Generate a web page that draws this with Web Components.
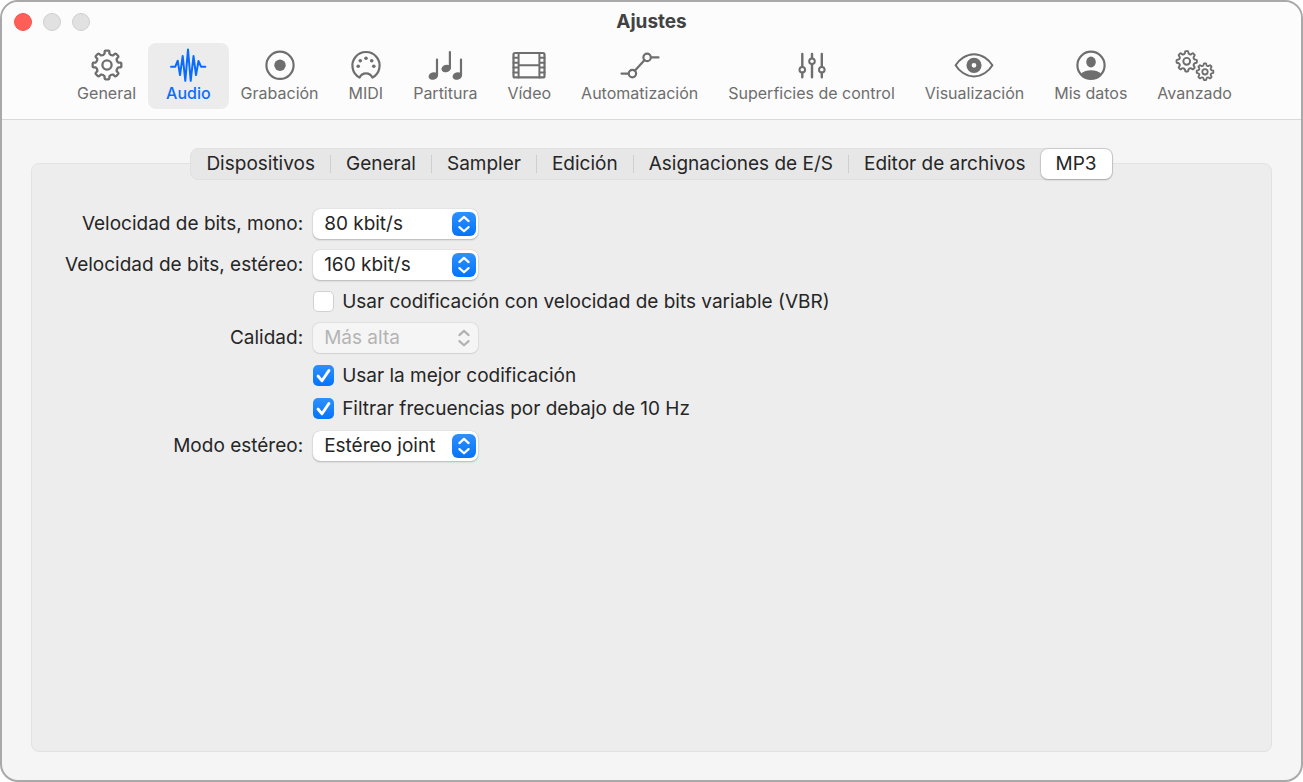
<!DOCTYPE html>
<html lang="es">
<head>
<meta charset="utf-8">
<title>Ajustes</title>
<style>
html, body { height: 100%; }
body { margin: 0; background: #fff; font-family: Inter, "Liberation Sans", sans-serif; color: #262626; }
</style>
</head>
<body>
<settings-window heading="Ajustes">
  <tool-item slot="tools" icon="gear">General</tool-item>
  <tool-item slot="tools" icon="audio" selected>Audio</tool-item>
  <tool-item slot="tools" icon="record">Grabación</tool-item>
  <tool-item slot="tools" icon="midi">MIDI</tool-item>
  <tool-item slot="tools" icon="notes">Partitura</tool-item>
  <tool-item slot="tools" icon="film">Vídeo</tool-item>
  <tool-item slot="tools" icon="automation">Automatización</tool-item>
  <tool-item slot="tools" icon="faders">Superficies de control</tool-item>
  <tool-item slot="tools" icon="eye">Visualización</tool-item>
  <tool-item slot="tools" icon="user">Mis datos</tool-item>
  <tool-item slot="tools" icon="gears">Avanzado</tool-item>
  <settings-panel>
    <tab-bar slot="tabs">
      <tab-item>Dispositivos</tab-item>
      <tab-item>General</tab-item>
      <tab-item>Sampler</tab-item>
      <tab-item>Edición</tab-item>
      <tab-item>Asignaciones de E/S</tab-item>
      <tab-item>Editor de archivos</tab-item>
      <tab-item selected>MP3</tab-item>
    </tab-bar>
    <popup-field label="Velocidad de bits, mono:" value="80 kbit/s"></popup-field>
    <popup-field label="Velocidad de bits, estéreo:" value="160 kbit/s"></popup-field>
    <check-field>Usar codificación con velocidad de bits variable (VBR)</check-field>
    <popup-field label="Calidad:" value="Más alta" disabled></popup-field>
    <check-group>
      <check-field checked>Usar la mejor codificación</check-field>
      <check-field checked>Filtrar frecuencias por debajo de 10 Hz</check-field>
    </check-group>
    <popup-field label="Modo estéreo:" value="Estéreo joint"></popup-field>
  </settings-panel>
</settings-window>

<script>
// Outline of a cog with eight rounded teeth, plus its hub.
function cog(cx, cy, outer, inner, hub, width) {
  const at = (r, deg) => {
    const a = (deg - 90) * Math.PI / 180;
    return (cx + r * Math.cos(a)).toFixed(2) + ' ' + (cy + r * Math.sin(a)).toFixed(2);
  };
  let d = '';
  for (let i = 0; i < 8; i++) {
    const t = i * 45;
    d += (i ? 'L' : 'M') + at(inner + 0.6, t - 12) + 'L' + at(outer - 0.8, t - 10) +
      'Q' + at(outer, t - 9) + ' ' + at(outer, t - 6) + 'L' + at(outer, t + 6) +
      'Q' + at(outer, t + 9) + ' ' + at(outer - 0.8, t + 10) + 'L' + at(inner + 0.6, t + 12) +
      'Q' + at(inner - 0.9, t + 22.5) + ' ' + at(inner + 0.6, t + 33);
  }
  return `<path d="${d}Z" stroke-width="${width}"/><circle cx="${cx}" cy="${cy}" r="${hub}" stroke-width="${width}"/>`;
}

const F = 'fill="currentColor" stroke="none"';
const ICONS = {
  gear: cog(20, 17, 14.4, 11, 4.6, 2.3),
  audio: '<path d="M3 18.7H7.3L9.7 12.7L12 27L14.7 8L17.3 32.8L20 1.6L22.7 32.8L25.5 8L28 27L30.5 13L33 18.7H37.3" stroke-width="2"/>',
  record: `<circle cx="20" cy="17.3" r="13.6"/><circle cx="20" cy="17.3" r="5.7" ${F}/>`,
  midi: `<path d="M13.6 29.6A13.6 13.6 0 1 1 26.4 29.6C25 26.4 22.5 25.4 20 25.4S15 26.4 13.6 29.6Z"/><g ${F}><circle cx="12.2" cy="18.3" r="1.8"/><circle cx="14.3" cy="12.8" r="1.8"/><circle cx="20" cy="10.3" r="1.8"/><circle cx="25.7" cy="12.8" r="1.8"/><circle cx="27.8" cy="18.3" r="1.8"/></g>`,
  notes: `<path d="M12 11.5V27.5M24.9 4V20M36 11.5V27.5" stroke-width="2.2"/><g ${F}><ellipse cx="8.3" cy="28" rx="4.8" ry="3.7" transform="rotate(-18 8.3 28)"/><ellipse cx="21.2" cy="20.5" rx="4.8" ry="3.7" transform="rotate(-18 21.2 20.5)"/><ellipse cx="32.3" cy="28" rx="4.8" ry="3.7" transform="rotate(-18 32.3 28)"/></g>`,
  film: '<rect x="4.5" y="5" width="31" height="24.4" rx="1.5"/><path d="M9.6 5V29.4M30.4 5V29.4M9.6 17.2H30.4M4.5 9.8H9.6M4.5 14.8H9.6M4.5 19.6H9.6M4.5 24.6H9.6M30.4 9.8H35.5M30.4 14.8H35.5M30.4 19.6H35.5M30.4 24.6H35.5" stroke-width="2"/>',
  automation: '<path d="M1.5 25.6H8.5M14.8 22.8L24.6 12M31 9.4H38.5"/><circle cx="12.4" cy="25.6" r="3.7"/><circle cx="27.1" cy="9.4" r="3.7"/>',
  faders: '<path d="M10.3 6V18.5M10.3 24.8V29.2M20 6V10M20 16.4V29.2M29.8 6V18.5M29.8 24.8V29.2" stroke-width="2.4"/><g stroke-width="2"><circle cx="10.3" cy="21.7" r="2.8"/><circle cx="20" cy="13.3" r="2.8"/><circle cx="29.8" cy="21.7" r="2.8"/></g>',
  eye: `<path d="M1.6 17.3C5 11.5 12 6.2 20 6.2S35 11.5 38.4 17.3C35 23.1 28 28.4 20 28.4S5 23.1 1.6 17.3Z" stroke-width="2"/><circle cx="20" cy="17.3" r="5" stroke-width="5.2"/>`,
  user: `<circle cx="20" cy="17.3" r="13.6"/><ellipse cx="20" cy="14" rx="4.8" ry="5.4" ${F}/><path d="M9.8 26C12.5 23.3 16 22.3 20 22.3S27.5 23.3 30.2 26A13.6 13.6 0 0 1 9.8 26Z" ${F}/>`,
  gears: cog(11.7, 13.3, 10.2, 7.8, 3.4, 1.9) + cog(30, 23.8, 8.4, 6.4, 2.7, 1.8)
};

class Base extends HTMLElement {
  connectedCallback() {
    if (this.shadowRoot) return;
    this.attachShadow({ mode: 'open' }).innerHTML = this.render();
  }
}

customElements.define('settings-window', class extends Base {
  render() {
    return `<style>
      :host { display: flex; flex-direction: column; box-sizing: border-box; height: 100vh; border: 2px solid #a9a9a9; border-radius: 18px; background: #f5f5f5; overflow: hidden; }
      header { background: #fcfcfc; border-bottom: 1px solid #d9d9d9; padding-bottom: 10px; }
      .bar { display: grid; grid-template-columns: 1fr auto 1fr; align-items: center; height: 40px; }
      .lights { display: flex; gap: 11px; padding-left: 12px; }
      .lights button { width: 18px; height: 18px; padding: 0; border: 1px solid #cfcfcf; border-radius: 50%; background: #e1e1e1; }
      .lights .close { background: #ff5f57; border-color: #f2564e; }
      h1 { margin: 0; font-size: 19px; line-height: 22px; font-weight: 700; color: #424242; }
      nav { display: flex; justify-content: center; padding-top: 1px; }
      main { flex: 1; display: flex; }
    </style>
    <header>
      <div class="bar">
        <div class="lights"><button class="close" aria-label="Cerrar"></button><button aria-label="Minimizar" disabled></button><button aria-label="Ampliar" disabled></button></div>
        <h1>${this.getAttribute('heading')}</h1>
      </div>
      <nav><slot name="tools"></slot></nav>
    </header>
    <main><slot></slot></main>`;
  }
});

customElements.define('tool-item', class extends Base {
  render() {
    return `<style>
      :host { display: block; margin-right: -6px; }
      button { display: flex; flex-direction: column; align-items: center; height: 66px; padding: 5px 18px 0; border: 0; border-radius: 8px; background: none; color: #6e6e6e; font: 16px/22px Inter, "Liberation Sans", sans-serif; white-space: nowrap; }
      :host([selected]) button { background: #ececec; color: #0a6cff; font-weight: 500; }
      svg { display: block; width: 40px; height: 34px; margin: 0 -5px; fill: none; stroke: currentColor; stroke-width: 2.2; stroke-linecap: round; stroke-linejoin: round; }
    </style>
    <button type="button"><svg viewBox="0 0 40 34" aria-hidden="true">${ICONS[this.getAttribute('icon')]}</svg><span><slot></slot></span></button>`;
  }
});

customElements.define('settings-panel', class extends Base {
  render() {
    return `<style>
      :host { flex: 1; display: flex; flex-direction: column; padding: 28px 29px; }
      .tabs { display: flex; justify-content: center; margin-bottom: -17px; position: relative; }
      section { flex: 1; box-sizing: border-box; display: grid; grid-template-columns: minmax(238px, max-content) 1fr; align-content: start; gap: 11px 10px; padding: 45px 33px; border: 1px solid #e2e2e2; border-radius: 8px; background: #ededed; }
    </style>
    <div class="tabs"><slot name="tabs"></slot></div>
    <section><slot></slot></section>`;
  }
});

customElements.define('tab-bar', class extends Base {
  render() {
    return `<style>
      :host { display: flex; box-sizing: border-box; height: 32px; border: 1px solid #e0e0e0; border-radius: 8px; background: #e7e7e7; }
    </style><slot></slot>`;
  }
});

customElements.define('tab-item', class extends Base {
  render() {
    return `<style>
      :host { display: flex; align-items: center; }
      :host(:not([selected]):not(:nth-last-child(2)))::after { content: ""; width: 1px; height: 18px; background: #cfcfcf; }
      button { height: 30px; padding: 0 15px; border: 0; border-radius: 7px; background: none; color: #262626; font: 19px/30px Inter, "Liberation Sans", sans-serif; white-space: nowrap; }
      :host([selected]) button { background: #fff; box-shadow: 0 0 1px 1px #00000018, 0 1px 2px #00000030; }
    </style><button type="button"><slot></slot></button>`;
  }
});

customElements.define('popup-field', class extends Base {
  render() {
    const off = this.hasAttribute('disabled') ? 'disabled' : '';
    return `<style>
      :host { display: contents; }
      label { text-align: right; font-size: 19px; line-height: 30px; white-space: nowrap; }
      .box { display: grid; width: 165px; height: 30px; align-items: center; }
      select { grid-area: 1 / 1; appearance: none; width: 100%; height: 30px; margin: 0; padding: 0 28px 0 11px; border: 0; border-radius: 7px; background: #fff; color: #262626; font: 19px/30px Inter, "Liberation Sans", sans-serif; box-shadow: 0 0 1px #00000040, 0 1px 2px #00000038; }
      select:disabled { background: #f5f5f5; color: #b4b4b4; opacity: 1; box-shadow: 0 0 1px 1px #00000010, 0 1px 1px #00000010; }
      svg { grid-area: 1 / 1; justify-self: end; width: 24px; height: 24px; margin-right: 2px; border-radius: 6px; pointer-events: none; fill: none; stroke: #fff; stroke-width: 2.2; stroke-linecap: round; stroke-linejoin: round; background: linear-gradient(#2e90ff, #0474fa); }
      select:disabled + svg { background: none; stroke: #b2b2b2; }
    </style>
    <label for="pick">${this.getAttribute('label')}</label>
    <div class="box"><select id="pick" ${off}><option>${this.getAttribute('value')}</option></select>
    <svg viewBox="0 0 24 24" aria-hidden="true"><path d="M7.4 9.1L12 4.9L16.6 9.1M7.4 15.1L12 19.3L16.6 15.1"/></svg></div>`;
  }
});

customElements.define('check-group', class extends Base {
  render() {
    return `<style>:host { grid-column: 2; display: grid; gap: 12px; padding: 1px 0; }</style><slot></slot>`;
  }
});

customElements.define('check-field', class extends Base {
  render() {
    return `<style>
      :host { display: block; grid-column: 2; }
      :host-context(check-group) { grid-column: auto; }
      label { display: flex; width: fit-content; align-items: center; gap: 8px; height: 21px; font-size: 19px; line-height: 21px; white-space: nowrap; }
      .box { display: grid; }
      input { grid-area: 1 / 1; appearance: none; box-sizing: border-box; width: 21px; height: 21px; margin: 0; border: 1px solid #d0d0d0; border-radius: 5px; background: #fff; }
      input:checked { border: 0; background: linear-gradient(#2e90ff, #0474fa); }
      svg { grid-area: 1 / 1; width: 21px; height: 21px; visibility: hidden; pointer-events: none; fill: none; stroke: #fff; stroke-width: 2.8; stroke-linecap: round; stroke-linejoin: round; }
      input:checked + svg { visibility: visible; }
    </style>
    <label><span class="box"><input type="checkbox" ${this.hasAttribute('checked') ? 'checked' : ''}><svg viewBox="0 0 21 21" aria-hidden="true"><path d="M5 11L9 15.8L16 5.4"/></svg></span><span><slot></slot></span></label>`;
  }
});
</script>
</body>
</html>
